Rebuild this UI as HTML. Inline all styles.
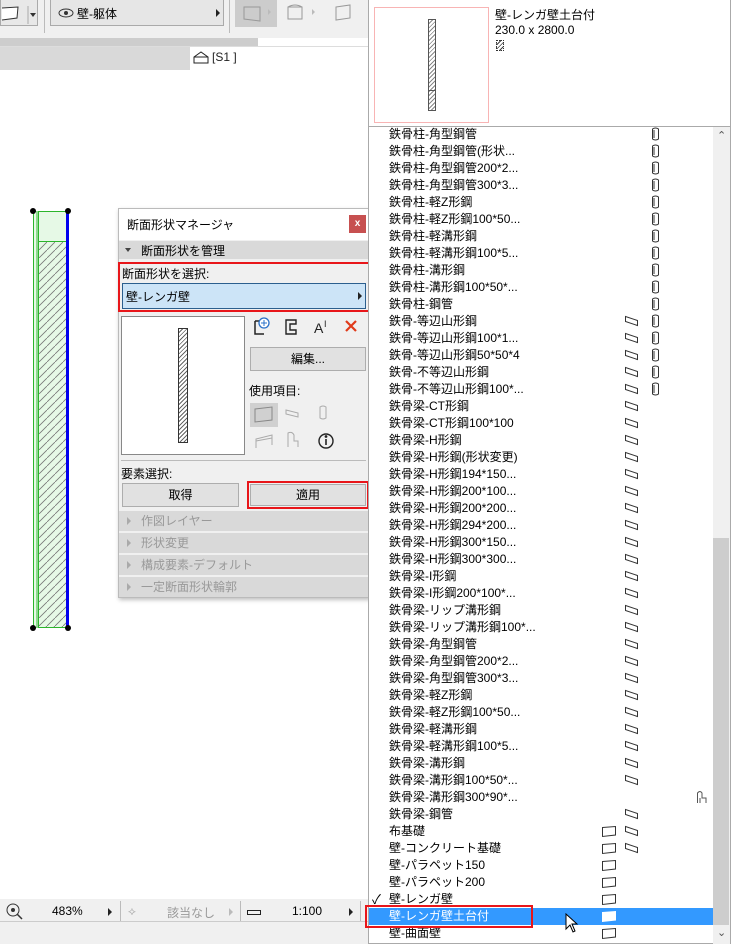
<!DOCTYPE html>
<html><head><meta charset="utf-8"><style>
*{margin:0;padding:0;box-sizing:border-box}
body{width:731px;height:944px;overflow:hidden;background:#fff;font-family:"Liberation Sans","Noto Sans CJK JP",sans-serif;font-size:12px;color:#000;position:relative}
.a{position:absolute}
.row{position:absolute;left:369px;width:344px;height:17px;line-height:17px}
.row span.t{position:absolute;left:20px}
.ic{position:absolute;top:1px}
</style></head><body>
<!-- top toolbar -->
<div class="a" style="left:0;top:0;width:370px;height:38px;background:#f0f0f0"></div>
<div class="a" style="left:0;top:0;width:38px;height:26px;border:1px solid #aaa;border-top:none;background:#e8e8e8"></div>
<svg class="a" style="left:0;top:4px" width="40" height="20"><path d="M2 4 L18 3 L17 14 L2 16" fill="#fff" stroke="#333"/><line x1="28" y1="2" x2="28" y2="22" stroke="#aaa"/><path d="M30 9 L36 9 L33 13Z" fill="#333"/></svg>
<div class="a" style="left:44px;top:0;width:1px;height:33px;background:#bbb"></div>
<div class="a" style="left:50px;top:0;width:174px;height:26px;border:1px solid #aaa;border-top:none;background:#e6e6e6"></div>
<svg class="a" style="left:58px;top:7px" width="18" height="12"><ellipse cx="8" cy="6" rx="7" ry="4" fill="none" stroke="#333"/><circle cx="8" cy="6" r="2" fill="#333"/></svg>
<div class="a" style="left:77px;top:5px">壁-躯体</div>
<div class="a" style="left:216px;top:9px;width:0;height:0;border-left:4px solid #222;border-top:4px solid transparent;border-bottom:4px solid transparent"></div>
<div class="a" style="left:229px;top:0;width:1px;height:33px;background:#bbb"></div>
<div class="a" style="left:235px;top:0;width:42px;height:27px;background:#ccc"></div>
<svg class="a" style="left:240px;top:3px" width="130" height="22" stroke="#999" fill="none"><path d="M4 4 L20 4 L20 18 L4 16Z"/><path d="M28 6 L31 9 L28 12Z" fill="#bbb" stroke="none"/><path d="M48 4 L62 4 L62 16 L48 16Z M48 4 Q55 0 62 4"/><path d="M72 6 L75 9 L72 12Z" fill="#bbb" stroke="none"/><path d="M96 4 L110 2 L110 15 L96 17Z"/></svg>
<div class="a" style="left:0;top:38px;width:258px;height:8px;background:#cdcdcd"></div>
<div class="a" style="left:0;top:46px;width:370px;height:1px;background:#ddd"></div>
<div class="a" style="left:0;top:47px;width:190px;height:23px;background:#d9d9d9"></div>
<svg class="a" style="left:193px;top:51px" width="18" height="14"><path d="M1 6 L8 1 L15 6 L15 12 L1 12Z M1 6 L15 6" fill="none" stroke="#222"/></svg>
<div class="a" style="left:212px;top:50px;color:#222">[S1 ]</div>
<!-- wall on canvas -->
<div class="a" style="left:33px;top:211px;width:35px;height:417px;border:1px solid #2bb52b;background:#e6f9e6"></div>
<div class="a" style="left:36px;top:211px;width:2px;height:417px;background:#8fd98f"></div>
<div class="a" style="left:38px;top:211px;width:1px;height:417px;background:#2bb52b"></div>
<div class="a" style="left:38px;top:241px;width:28px;height:1px;background:#2bb52b"></div>
<svg class="a" style="left:39px;top:242px" width="27" height="385"><defs><pattern id="h" width="8" height="8" patternUnits="userSpaceOnUse"><path d="M0 8 L8 0" stroke="#777" stroke-width="0.8"/></pattern></defs><rect width="27" height="385" fill="url(#h)"/></svg>
<div class="a" style="left:66px;top:211px;width:3px;height:417px;background:#0000ee"></div>
<div class="a" style="left:30px;top:208px;width:6px;height:6px;border-radius:3px;background:#000"></div>
<div class="a" style="left:65px;top:208px;width:6px;height:6px;border-radius:3px;background:#000"></div>
<div class="a" style="left:30px;top:625px;width:6px;height:6px;border-radius:3px;background:#000"></div>
<div class="a" style="left:65px;top:625px;width:6px;height:6px;border-radius:3px;background:#000"></div>
<!-- dialog -->
<div class="a" style="left:118px;top:208px;width:252px;height:390px;background:#f0f0f0;border:1px solid #bbb;box-shadow:1px 2px 4px rgba(0,0,0,.25)"></div>
<div class="a" style="left:119px;top:209px;width:250px;height:31px;background:#fff"></div>
<div class="a" style="left:127px;top:216px;font-size:12px">断面形状マネージャ</div>
<div class="a" style="left:349px;top:215px;width:17px;height:18px;background:#c75050;color:#fff;font-size:10px;text-align:center;line-height:17px;font-weight:bold">x</div>
<div class="a" style="left:119px;top:241px;width:250px;height:18px;background:#d9d9d9"></div>
<div class="a" style="left:125px;top:248px;width:0;height:0;border-top:4px solid #444;border-left:3px solid transparent;border-right:3px solid transparent"></div>
<div class="a" style="left:141px;top:242px">断面形状を管理</div>
<div class="a" style="left:118px;top:262px;width:252px;height:50px;border:2px solid #e8161a"></div>
<div class="a" style="left:122px;top:265px">断面形状を選択:</div>
<div class="a" style="left:122px;top:283px;width:244px;height:26px;background:#cce4f7;border:1px solid #2b5f8e"></div>
<div class="a" style="left:126px;top:288px">壁-レンガ壁</div>
<div class="a" style="left:358px;top:292px;border-left:4px solid #222;border-top:4px solid transparent;border-bottom:4px solid transparent"></div>
<div class="a" style="left:121px;top:316px;width:124px;height:139px;background:#fff;border:1px solid #888"></div>
<div class="a" style="left:178px;top:328px;width:10px;height:115px;border:1px solid #333;background:repeating-linear-gradient(135deg,#fff 0 2px,#666 2px 3px)"></div>
<svg class="a" style="left:252px;top:316px" width="115" height="22"><path d="M3 5 L3 18 L12 18 M3 5 L8 5" fill="none" stroke="#222" stroke-width="1.5"/><circle cx="12" cy="7" r="5" fill="#fff" stroke="#2a70c8" stroke-width="1.3"/><path d="M9 7 L15 7 M12 4 L12 10" stroke="#2a70c8"/><path d="M34 4 L44 4 L44 8 L38 8 L38 14 L44 14 L44 18 L34 18Z" fill="none" stroke="#222" stroke-width="1.4"/><text x="62" y="17" font-size="14" font-family="Liberation Sans" fill="#222">A</text><text x="72" y="11" font-size="9" fill="#222">I</text><path d="M94 5 L104 15 M104 5 L94 15" stroke="#e03a1a" stroke-width="2.2"/></svg>
<div class="a" style="left:250px;top:347px;width:116px;height:24px;border:1px solid #adadad;background:#e1e1e1;text-align:center;line-height:22px">編集...</div>
<div class="a" style="left:249px;top:382px">使用項目:</div>
<div class="a" style="left:250px;top:403px;width:28px;height:24px;background:#d0d0d0"></div>
<svg class="a" style="left:250px;top:403px" width="90" height="48" fill="none" stroke="#aaa"><path d="M5 6 L22 4 L22 17 L5 19Z" stroke="#888"/><path d="M36 7 L48 10 L48 14 L36 11Z M36 7 L36 11"/><path d="M70 4 Q73 2 76 4 L76 15 Q73 17 70 15Z"/><path d="M6 45 L6 36 L22 32 L22 42 M6 38 L22 35"/><path d="M38 44 L38 30 Q42 28 44 32 L44 38 L48 38 L48 44"/><circle cx="76" cy="38" r="7" stroke="#222" stroke-width="1.4"/><path d="M76 36 L76 42" stroke="#222" stroke-width="1.6"/><circle cx="76" cy="33.5" r="0.9" fill="#222" stroke="#222"/></svg>
<div class="a" style="left:121px;top:460px;width:245px;height:1px;background:#bbb"></div>
<div class="a" style="left:121px;top:465px">要素選択:</div>
<div class="a" style="left:122px;top:483px;width:117px;height:24px;border:1px solid #adadad;background:#e1e1e1;text-align:center;line-height:22px">取得</div>
<div class="a" style="left:247px;top:481px;width:122px;height:28px;border:2px solid #e8161a"></div>
<div class="a" style="left:250px;top:484px;width:116px;height:22px;border:1px solid #adadad;background:#e1e1e1;text-align:center;line-height:20px">適用</div>
<div class="a" style="left:119px;top:511px;width:250px;height:20px;background:#d9d9d9;color:#999;padding-left:22px;line-height:20px">作図レイヤー</div>
<div class="a" style="left:119px;top:533px;width:250px;height:20px;background:#d9d9d9;color:#999;padding-left:22px;line-height:20px">形状変更</div>
<div class="a" style="left:119px;top:555px;width:250px;height:20px;background:#d9d9d9;color:#999;padding-left:22px;line-height:20px">構成要素-デフォルト</div>
<div class="a" style="left:119px;top:577px;width:250px;height:20px;background:#d9d9d9;color:#999;padding-left:22px;line-height:20px">一定断面形状輪郭</div>
<div class="a" style="left:127px;top:517px;border-left:4px solid #aaa;border-top:4px solid transparent;border-bottom:4px solid transparent"></div>
<div class="a" style="left:127px;top:539px;border-left:4px solid #aaa;border-top:4px solid transparent;border-bottom:4px solid transparent"></div>
<div class="a" style="left:127px;top:561px;border-left:4px solid #aaa;border-top:4px solid transparent;border-bottom:4px solid transparent"></div>
<div class="a" style="left:127px;top:583px;border-left:4px solid #aaa;border-top:4px solid transparent;border-bottom:4px solid transparent"></div>
<!-- status bar -->
<div class="a" style="left:0;top:899px;width:370px;height:45px;background:#f0f0f0"></div>
<div class="a" style="left:0;top:921px;width:370px;height:1px;background:#ccc"></div>
<svg class="a" style="left:5px;top:902px" width="20" height="18"><circle cx="8" cy="8" r="6" fill="none" stroke="#333"/><path d="M12 12 L17 17" stroke="#333" stroke-width="1.5"/><circle cx="8" cy="8" r="2" fill="#333"/></svg>
<div class="a" style="left:52px;top:904px">483%</div>
<div class="a" style="left:108px;top:908px;border-left:4px solid #222;border-top:4px solid transparent;border-bottom:4px solid transparent"></div>
<div class="a" style="left:120px;top:901px;width:1px;height:20px;background:#bbb"></div>
<div class="a" style="left:128px;top:904px;color:#aaa">⟡</div>
<div class="a" style="left:167px;top:904px;color:#999">該当なし</div>
<div class="a" style="left:229px;top:908px;border-left:4px solid #bbb;border-top:4px solid transparent;border-bottom:4px solid transparent"></div>
<div class="a" style="left:240px;top:901px;width:1px;height:20px;background:#bbb"></div>
<div class="a" style="left:247px;top:910px;width:14px;height:5px;border:1px solid #222"></div>
<div class="a" style="left:292px;top:904px">1:100</div>
<div class="a" style="left:349px;top:908px;border-left:4px solid #222;border-top:4px solid transparent;border-bottom:4px solid transparent"></div>
<div class="a" style="left:360px;top:901px;width:1px;height:20px;background:#bbb"></div>
<!-- popup -->
<div class="a" style="left:368px;top:0;width:363px;height:944px;background:#fff;border:1px solid #aaa;border-top:none"></div>
<div class="a" style="left:374px;top:7px;width:115px;height:116px;border:1px solid #f8b4b4"></div>
<div class="a" style="left:428px;top:19px;width:8px;height:92px;border:1px solid #555;background:repeating-linear-gradient(135deg,#fff 0 2px,#888 2px 3px)"></div>
<div class="a" style="left:428px;top:90px;width:8px;height:1px;background:#555"></div>
<div class="a" style="left:495px;top:6px">壁-レンガ壁土台付</div>
<div class="a" style="left:495px;top:23px">230.0 x 2800.0</div>
<div class="a" style="left:496px;top:40px;width:8px;height:11px;border:1px dotted #333;background:repeating-linear-gradient(135deg,#fff 0 2px,#444 2px 3px)"></div>
<div class="a" style="left:369px;top:126px;width:361px;height:1px;background:#aaa"></div>
<div class="a" style="left:713px;top:127px;width:17px;height:817px;background:#f0f0f0"></div>
<div class="a" style="left:713px;top:538px;width:16px;height:387px;background:#cdcdcd"></div>
<div class="a" style="left:717px;top:129px;color:#555;font-size:11px">⌃</div>
<div class="a" style="left:717px;top:926px;color:#555;font-size:11px">⌄</div>
<div class="a" style="left:369px;top:908px;width:344px;height:17px;background:#3399ff"></div>
<div id="list"></div>
<div class="a" style="left:365px;top:905px;width:168px;height:23px;border:2px solid #e8161a"></div>
<svg class="a" style="left:565px;top:913px" width="14" height="22"><path d="M1 1 L1 16 L5 12 L8 19 L10 18 L7 11 L12 11Z" fill="#fff" stroke="#000"/></svg>
<div class="a" style="left:372px;top:889px;font-size:13px">✓</div>
<script>
var R=[["鉄骨柱-角型鋼管","c"],["鉄骨柱-角型鋼管(形状...","c"],["鉄骨柱-角型鋼管200*2...","c"],["鉄骨柱-角型鋼管300*3...","c"],["鉄骨柱-軽Z形鋼","c"],["鉄骨柱-軽Z形鋼100*50...","c"],["鉄骨柱-軽溝形鋼","c"],["鉄骨柱-軽溝形鋼100*5...","c"],["鉄骨柱-溝形鋼","c"],["鉄骨柱-溝形鋼100*50*...","c"],["鉄骨柱-鋼管","c"],["鉄骨-等辺山形鋼","bc"],["鉄骨-等辺山形鋼100*1...","bc"],["鉄骨-等辺山形鋼50*50*4","bc"],["鉄骨-不等辺山形鋼","bc"],["鉄骨-不等辺山形鋼100*...","bc"],["鉄骨梁-CT形鋼","b"],["鉄骨梁-CT形鋼100*100","b"],["鉄骨梁-H形鋼","b"],["鉄骨梁-H形鋼(形状変更)","b"],["鉄骨梁-H形鋼194*150...","b"],["鉄骨梁-H形鋼200*100...","b"],["鉄骨梁-H形鋼200*200...","b"],["鉄骨梁-H形鋼294*200...","b"],["鉄骨梁-H形鋼300*150...","b"],["鉄骨梁-H形鋼300*300...","b"],["鉄骨梁-I形鋼","b"],["鉄骨梁-I形鋼200*100*...","b"],["鉄骨梁-リップ溝形鋼","b"],["鉄骨梁-リップ溝形鋼100*...","b"],["鉄骨梁-角型鋼管","b"],["鉄骨梁-角型鋼管200*2...","b"],["鉄骨梁-角型鋼管300*3...","b"],["鉄骨梁-軽Z形鋼","b"],["鉄骨梁-軽Z形鋼100*50...","b"],["鉄骨梁-軽溝形鋼","b"],["鉄骨梁-軽溝形鋼100*5...","b"],["鉄骨梁-溝形鋼","b"],["鉄骨梁-溝形鋼100*50*...","b"],["鉄骨梁-溝形鋼300*90*...","h"],["鉄骨梁-鋼管","b"],["布基礎","wb"],["壁-コンクリート基礎","wb"],["壁-パラペット150","w"],["壁-パラペット200","w"],["壁-レンガ壁","w"],["壁-レンガ壁土台付","w"],["壁-曲面壁","w"]];
var h="";
R.forEach(function(r,i){var y=126+i*17;var sel=i==46;var col=sel?"#fff":"#333";
h+='<div class="row" style="top:'+y+'px;'+(sel?'color:#fff':'')+'"><span class="t">'+r[0]+'</span>';
if(r[1].indexOf("w")>=0)h+='<svg class="ic" style="left:232px" width="16" height="14"><path d="M1.5 3.5 L14.5 2.5 L14.5 11 L1.5 12.5Z" fill="'+(sel?'#fff':'#fff')+'" stroke="'+col+'"/></svg>';
if(r[1].indexOf("b")>=0)h+='<svg class="ic" style="left:255px" width="16" height="14"><path d="M1.5 2.5 L13.5 6.5 L13.5 11.5 L1.5 7.5Z M1.5 2.5 L1.5 5 M13.5 9 L13.5 11.5" fill="none" stroke="'+col+'"/></svg>';
if(r[1].indexOf("c")>=0)h+='<svg class="ic" style="left:282px" width="10" height="15"><path d="M1.5 2 Q4.5 0 7.5 2 L7.5 12 Q4.5 14 1.5 12Z M3 3 L3 11" fill="none" stroke="'+col+'"/></svg>';
if(r[1]=="h")h+='<svg class="ic" style="left:327px" width="12" height="15"><path d="M1.5 13 L1.5 3 Q4 0 6 3 L6 8 L10 8 L10 13 M4 8 L4 13" fill="none" stroke="#555"/></svg>';
h+='</div>';});
document.getElementById("list").innerHTML=h;
</script>
</body></html>
